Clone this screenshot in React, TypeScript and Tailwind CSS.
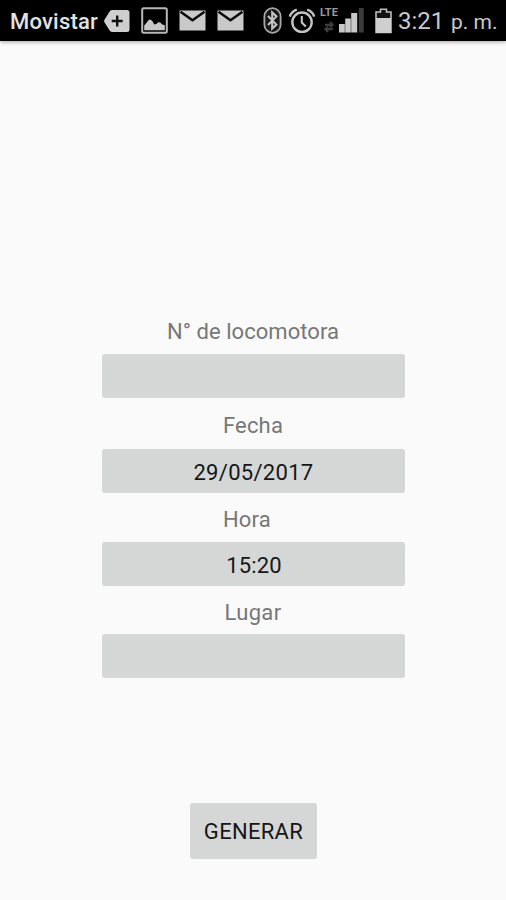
import type { ReactNode } from 'react';

function TagIcon() {
  return (
    <svg className="ml-[6px] h-[24px] w-[26px] shrink-0" viewBox="0 0 26 24">
      <path d="M8 1h15a2.5 2.5 0 0 1 2.5 2.5v17A2.5 2.5 0 0 1 23 23H8a3 3 0 0 1-2.4-1.4L.6 13.4a2.5 2.5 0 0 1 0-2.8l5-8.2A3 3 0 0 1 8 1z" fill="#cfcfcf" />
      <path d="M13.2 6.5v11M7.7 12h11" stroke="#111" strokeWidth="2.4" />
    </svg>
  );
}

function PictureIcon() {
  return (
    <svg className="ml-[11px] h-[27px] w-[27px] shrink-0" viewBox="0 0 27 27">
      <rect x="1.2" y="1.2" width="24.6" height="24.6" rx="1.5" fill="#000" stroke="#b8b8b8" strokeWidth="2" />
      <path d="M3.2 23.2v-4.7l2.6-3 1.5-2.3 2-.7 2 1.5 2 3.5 2-.5 2-1.7 2 .2 2 2 2.5.8v4.9z" fill="#c8c8c8" />
    </svg>
  );
}

function MailIcon({ className }: { className: string }) {
  return (
    <svg className={`h-[21px] w-[27px] shrink-0 ${className}`} viewBox="0 0 27 21">
      <rect x=".5" y=".5" width="26" height="20" fill="#c9c9c9" />
      <path d="M1.5 1.8l12 8.4 12-8.4" fill="none" stroke="#0a0a0a" strokeWidth="2.5" />
    </svg>
  );
}

function BluetoothIcon() {
  return (
    <svg className="ml-[19px] h-[27px] w-[19px] shrink-0" viewBox="0 0 19 27">
      <rect x="1.4" y="1.2" width="16.2" height="24.6" rx="8.1" fill="#161616" stroke="#a8a8a8" strokeWidth="1.8" />
      <path d="M5 9l8.4 8.6-4.2 3.9V5.5l4.2 3.9L5 18" fill="none" stroke="#c4c4c4" strokeWidth="2.1" />
    </svg>
  );
}

function AlarmIcon() {
  return (
    <svg className="ml-[6px] h-[26px] w-[28px] shrink-0" viewBox="0 0 28 26" fill="none" stroke="#c4c4c4">
      <circle cx="14" cy="14.2" r="9.7" strokeWidth="2.4" />
      <path d="M13.8 8v6.6l4 4" strokeWidth="2.1" />
      <path d="M1.8 8.6c1-3.4 3.5-5.8 7-7M26.2 8.6c-1-3.4-3.5-5.8-7-7" strokeWidth="2.4" />
    </svg>
  );
}

function SignalIcon() {
  return (
    <svg className="h-[26px] w-[26px] shrink-0" viewBox="0 0 26 26">
      <path d="M0 16h5.8v8.5H0z M6.2 10.5h5.6v14H6.2z M12.2 5h6v19.5h-6z" fill="#c8c8c8" />
      <path d="M19.8 0h4.9v24.5h-4.9z" fill="#3c3c3c" />
    </svg>
  );
}

function DataArrows() {
  return (
    <svg className="ml-[4px] mt-[3px] h-[12px] w-[10px]" viewBox="0 0 10 12" fill="none" stroke="#3d3d3d" strokeWidth="2.2">
      <path d="M1 3.8h7M6 1l2.5 2.8L6 6.2M9 8.2H2M4 5.8L1.5 8.2 4 11" />
    </svg>
  );
}

function BatteryIcon() {
  return (
    <svg className="ml-[10px] h-[26px] w-[17px] shrink-0" viewBox="0 0 17 26">
      <path d="M1 4h4.5V1.2h6V4H16v20.5H1z" fill="#111" stroke="#bdbdbd" strokeWidth="1.6" />
      <path d="M1 10h15v15H1z" fill="#cfcfcf" />
    </svg>
  );
}

function StatusBar() {
  return (
    <header className="flex h-[41px] items-center whitespace-nowrap bg-black pl-[10px] text-[#d6d6d6] shadow-[0_1px_4px_rgba(0,0,0,0.35)]">
      <div className="w-[88px] shrink-0 pt-[2px] text-[22px] font-medium leading-none tracking-[0.2px] text-[#e2e2e2]">Movistar</div>
      <TagIcon />
      <PictureIcon />
      <MailIcon className="ml-[11px]" />
      <MailIcon className="ml-[11px]" />
      <BluetoothIcon />
      <AlarmIcon />
      <div className="ml-[4px] h-[26px] w-[19px] shrink-0">
        <div className="text-[11px] font-bold leading-[10px] tracking-[0.1px] text-[#999]">LTE</div>
        <DataArrows />
      </div>
      <SignalIcon />
      <BatteryIcon />
      <div className="ml-[6px] flex shrink-0 items-baseline pt-[1px] leading-none text-[#c9c9c9]">
        <span className="w-[53px] text-[24px]">3:21</span>
        <span className="text-[21px]">p. m.</span>
      </div>
    </header>
  );
}

function Field({ label, labelClass, children }: { label: string; labelClass: string; children?: ReactNode }) {
  return (
    <div className="flex w-[303px] flex-col">
      <div className={`whitespace-nowrap text-center text-[22px] text-[#777] ${labelClass}`}>{label}</div>
      <button className="h-[44px] w-full rounded-[3px] bg-[#d5d7d6] pt-[2px] text-[22px] leading-[43px] text-[#161616]">
        {children}
      </button>
    </div>
  );
}

export default function App() {
  return (
    <div className="flex h-[900px] w-[506px] flex-col overflow-hidden bg-[#fafafa] font-[Roboto,sans-serif]">
      <StatusBar />
      <main className="flex flex-col items-center pt-[269px]">
        <Field label="N° de locomotora" labelClass="h-[44px] leading-[43px] tracking-[0.05px]" />
        <div className="mt-[6px]">
          <Field label="Fecha" labelClass="h-[45px] leading-[44px] tracking-[0.2px]">
            <span className="pl-[1px] tracking-[0.3px]">29/05/2017</span>
          </Field>
        </div>
        <div className="mt-[5px]">
          <Field label="Hora" labelClass="h-[44px] pr-[12px] leading-[44px] tracking-[0.2px]">
            <span className="pl-[2px] tracking-[0.1px]">15:20</span>
          </Field>
        </div>
        <div className="mt-[5px]">
          <Field label="Lugar" labelClass="h-[43px] leading-[43px] tracking-[0.3px]" />
        </div>
        <button className="mt-[125px] h-[56px] w-[127px] rounded-[3px] bg-[#d5d7d6] pl-[1px] text-[22px] leading-[57px] tracking-[0.3px] text-[#161616]">
          GENERAR
        </button>
      </main>
    </div>
  );
}
